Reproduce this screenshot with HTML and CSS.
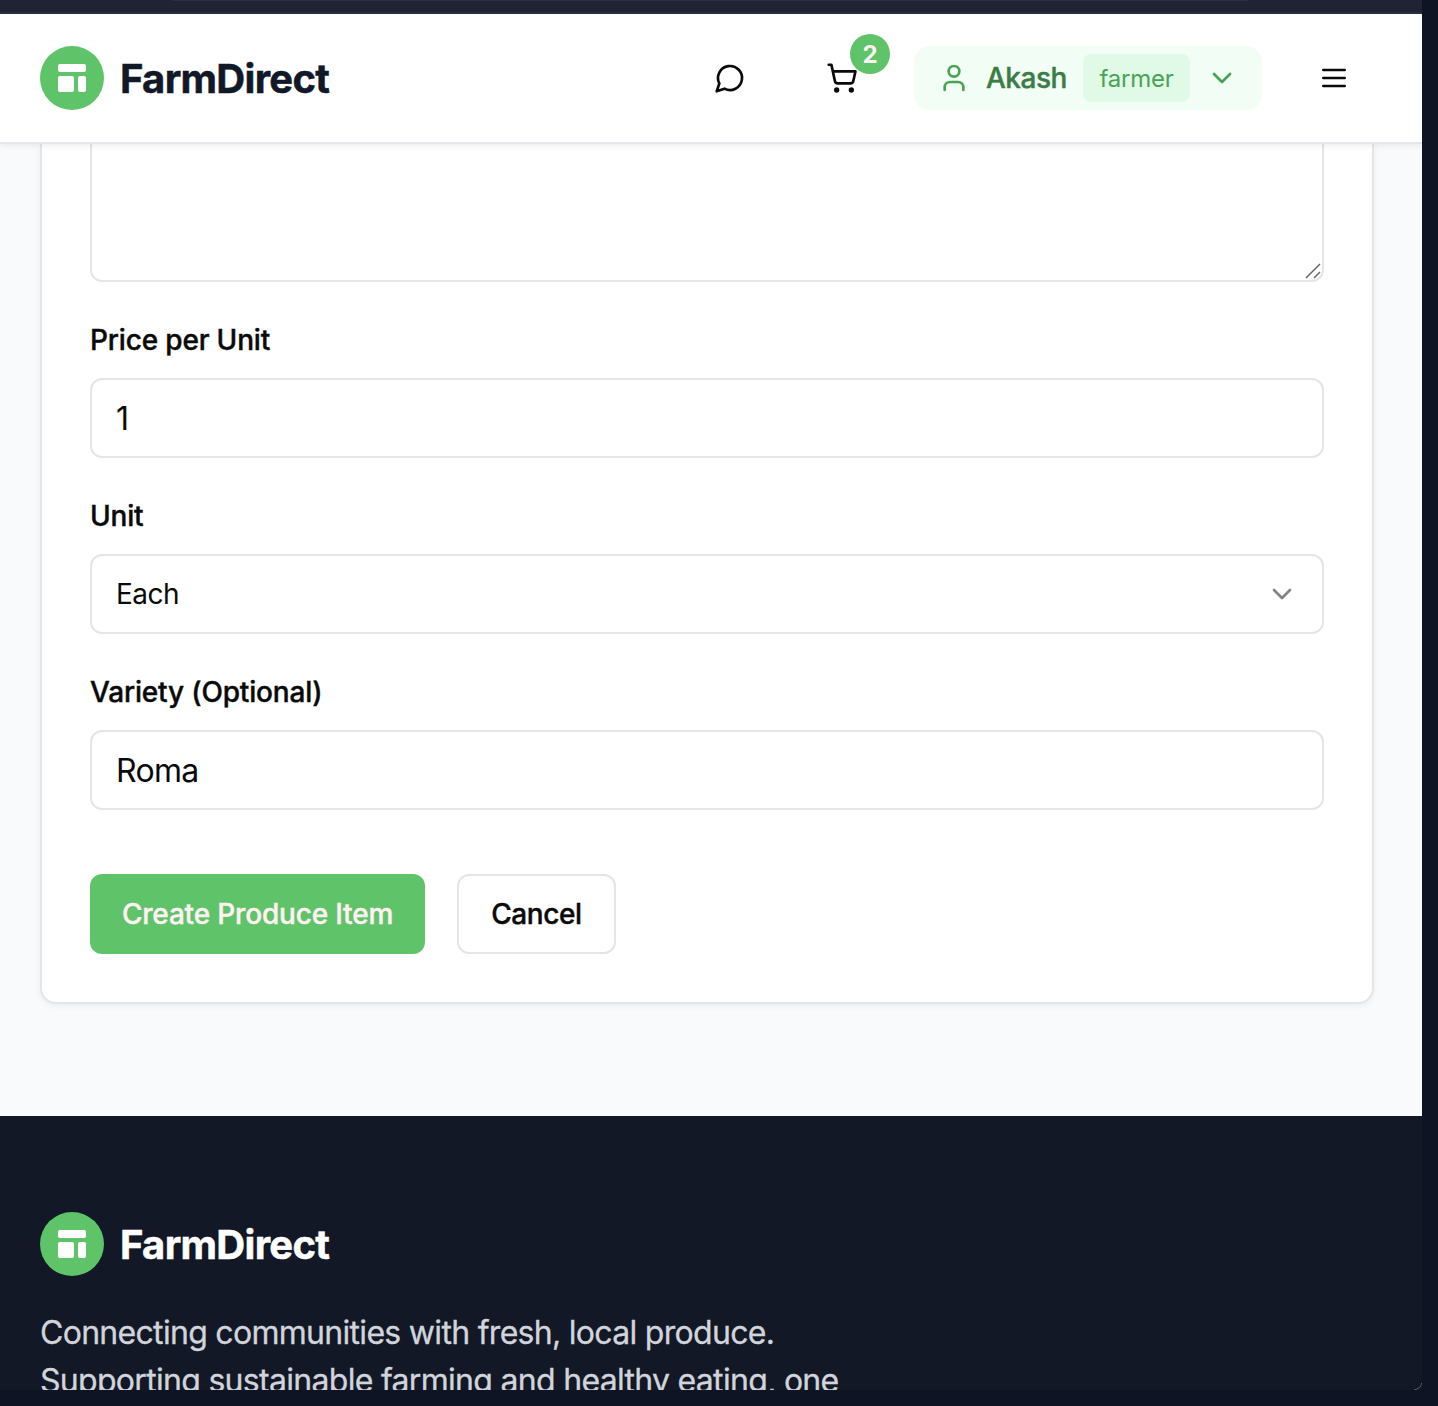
FILE: index.html
```html
<!DOCTYPE html>
<html lang="en">
<head>
<meta charset="utf-8">
<title>FarmDirect</title>
<link rel="stylesheet" href="styles.css">
</head>
<body>
<div class="window">
  <div class="chrome"><div class="chrome-line"></div></div>
  <header class="header">
    <a class="brand">
      <svg class="logo" viewBox="0 0 64 64"><circle cx="32" cy="32" r="32" fill="#5fc36a"/><g fill="#fff"><rect x="18" y="18" width="28" height="8" rx="2"/><rect x="18" y="30" width="16" height="16" rx="2"/><rect x="38" y="30" width="8" height="16" rx="2"/></g></svg>
      <span>FarmDirect</span>
    </a>
    <nav class="actions">
      <button class="icon-btn chat"><svg class="icon" viewBox="0 0 24 24"><path d="M7.9 20A9 9 0 1 0 4 16.1L2 22Z"/></svg></button>
      <button class="icon-btn cart"><svg class="icon" viewBox="0 0 24 24"><circle cx="8" cy="21" r="1"/><circle cx="19" cy="21" r="1"/><path d="M2.05 2.05h2l2.66 12.42a2 2 0 0 0 2 1.58h9.78a2 2 0 0 0 1.95-1.57l1.65-7.43H5.12"/></svg><span class="count">2</span></button>
      <button class="user">
        <svg class="icon" viewBox="0 0 24 24"><path d="M19 21v-2a4 4 0 0 0-4-4H9a4 4 0 0 0-4 4v2"/><circle cx="12" cy="7" r="4"/></svg>
        <span class="user-name">Akash</span>
        <span class="role">farmer</span>
        <svg class="icon" viewBox="0 0 24 24"><path d="m6 9 6 6 6-6"/></svg>
      </button>
      <button class="icon-btn menu"><svg class="icon" viewBox="0 0 24 24"><path d="M4 12h16M4 6h16M4 18h16"/></svg></button>
    </nav>
  </header>
  <main class="main">
    <form class="card">
      <div class="textarea"><svg class="grip" viewBox="0 0 16 16"><path d="M1 15 15 1M9 15l6-6"/></svg></div>
      <div class="field">
        <label class="label">Price per Unit</label>
        <div class="control">1</div>
      </div>
      <div class="field">
        <label class="label">Unit</label>
        <div class="control select"><span>Each</span><svg class="icon" viewBox="0 0 24 24"><path d="m6 9 6 6 6-6"/></svg></div>
      </div>
      <div class="field">
        <label class="label">Variety (Optional)</label>
        <div class="control">Roma</div>
      </div>
      <div class="buttons">
        <button type="button" class="btn primary">Create Produce Item</button>
        <button type="button" class="btn outline">Cancel</button>
      </div>
    </form>
  </main>
  <footer class="footer">
    <a class="brand light">
      <svg class="logo" viewBox="0 0 64 64"><circle cx="32" cy="32" r="32" fill="#5fc36a"/><g fill="#fff"><rect x="18" y="18" width="28" height="8" rx="2"/><rect x="18" y="30" width="16" height="16" rx="2"/><rect x="38" y="30" width="8" height="16" rx="2"/></g></svg>
      <span>FarmDirect</span>
    </a>
    <p class="tagline">Connecting communities with fresh, local produce.<br>Supporting sustainable farming and healthy eating, one</p>
    <svg class="corner" viewBox="0 0 8 8"><path d="M7.5 1v1.500Q6.500 6 2 7.500H.5"/></svg>
  </footer>
</div>
</body>
</html>
```
FILE: styles.css
```css
* { box-sizing: border-box; }
body {
  margin: 0;
  height: 1406px;
  overflow: hidden;
  background: #0e1423;
  font-family: Inter, "Liberation Sans", sans-serif;
  color: #0a0a0a;
}
button { font: inherit; color: inherit; border: 0; padding: 0; background: none; }
.window {
  width: 1422px;
  height: 1390px;
  display: flex;
  flex-direction: column;
  overflow: hidden;
}
.chrome {
  height: 14px;
  flex: none;
  background: #1e2433;
  border-bottom: 2px solid #2b303f;
}
.chrome-line { height: 1px; margin: 0 173px; background: #2b303f; }
.header {
  height: 130px;
  flex: none;
  display: flex;
  align-items: center;
  justify-content: space-between;
  padding: 0 72px 0 40px;
  background: #fff;
  border-bottom: 2px solid #e5e7eb;
  box-shadow: 0 2px 6px rgba(0, 0, 0, .07);
  z-index: 1;
}
.brand {
  display: flex;
  align-items: center;
  gap: 16px;
  font-size: 40px;
  line-height: 56px;
  font-weight: 700;
  letter-spacing: -.7px;
  -webkit-text-stroke: .5px;
  color: #111827;
}
.brand span { padding-top: 2px; }
.brand.light { color: #fff; }
.logo { width: 64px; height: 64px; }
.icon {
  display: block;
  flex: none;
  width: 32px;
  height: 32px;
  fill: none;
  stroke: currentColor;
  stroke-width: 2;
  stroke-linecap: round;
  stroke-linejoin: round;
}
.actions { display: flex; align-items: center; }
.chat { margin-right: 80px; }
.cart { position: relative; margin-right: 56px; }
.count {
  position: absolute;
  top: -28px;
  right: -32px;
  width: 40px;
  height: 40px;
  border-radius: 50%;
  background: #5fc36a;
  color: #fff1f2;
  font-size: 24px;
  font-weight: 700;
  line-height: 41px;
  text-align: center;
}
.user {
  width: 348px;
  height: 64px;
  display: flex;
  align-items: center;
  padding: 0 24px;
  margin-right: 56px;
  border-radius: 16px;
  background: #f2fdf5;
  color: #4aa355;
}
.user-name {
  width: 97px;
  margin-left: 16px;
  text-align: left;
  font-size: 28px;
  font-weight: 500;
  -webkit-text-stroke: .4px;
  letter-spacing: -.5px;
  color: #3b7d44;
}
.role {
  width: 107px;
  height: 48px;
  margin-right: 16px;
  border-radius: 8px;
  background: #e1fae8;
  font-size: 24px;
  letter-spacing: -.2px;
  line-height: 49px;
}
.main {
  height: 972px;
  flex: none;
  padding: 0 48px 112px 40px;
  background: #f9fafc;
}
.card {
  height: 860px;
  padding: 0 48px 48px;
  background: #fff;
  border: 2px solid #e5e5e5;
  border-top: 0;
  border-radius: 0 0 16px 16px;
  box-shadow: 0 2px 6px rgba(0, 0, 0, .06);
}
.textarea {
  height: 138px;
  display: flex;
  align-items: flex-end;
  justify-content: flex-end;
  border: 2px solid #e5e5e5;
  border-top: 0;
  border-radius: 0 0 12px 12px;
}
.grip { width: 16px; height: 16px; margin: 0 1px 1px 0; fill: none; stroke: #666; stroke-width: 1.5; }
.field { padding-top: 44px; }
.label {
  display: block;
  height: 52px;
  font-size: 28px;
  font-weight: 500;
  -webkit-text-stroke: .4px;
  letter-spacing: -.17px;
  line-height: 29px;
}
.control {
  height: 80px;
  padding: 0 24px;
  border: 2px solid #e5e5e5;
  border-radius: 12px;
  font-size: 32px;
  letter-spacing: -.7px;
  line-height: 78px;
}
.select {
  display: flex;
  align-items: center;
  justify-content: space-between;
  font-size: 28px;
  letter-spacing: -.5px;
}
.select .icon { color: #848484; }
.buttons { display: flex; gap: 32px; margin-top: 64px; }
.btn {
  height: 80px;
  border-radius: 12px;
  font-size: 28px;
  font-weight: 500;
  -webkit-text-stroke: .4px;
  letter-spacing: -.18px;
}
.primary { width: 335px; background: #5fc36a; color: #fff1f2; }
.outline { width: 159px; border: 2px solid #e5e5e5; background: #fff; letter-spacing: -.4px; }
.footer {
  position: relative;
  height: 274px;
  flex: none;
  padding: 96px 40px 0;
  background: #121826;
}
.tagline {
  margin: 33px 0 0;
  font-size: 32px;
  line-height: 48px;
  letter-spacing: -.7px;
  -webkit-text-stroke: .3px;
  white-space: nowrap;
  color: #d1d5db;
}
.corner {
  position: absolute;
  right: 0;
  bottom: 0;
  width: 8px;
  height: 8px;
  fill: none;
  stroke: #596070;
  stroke-width: 1;
}
```
